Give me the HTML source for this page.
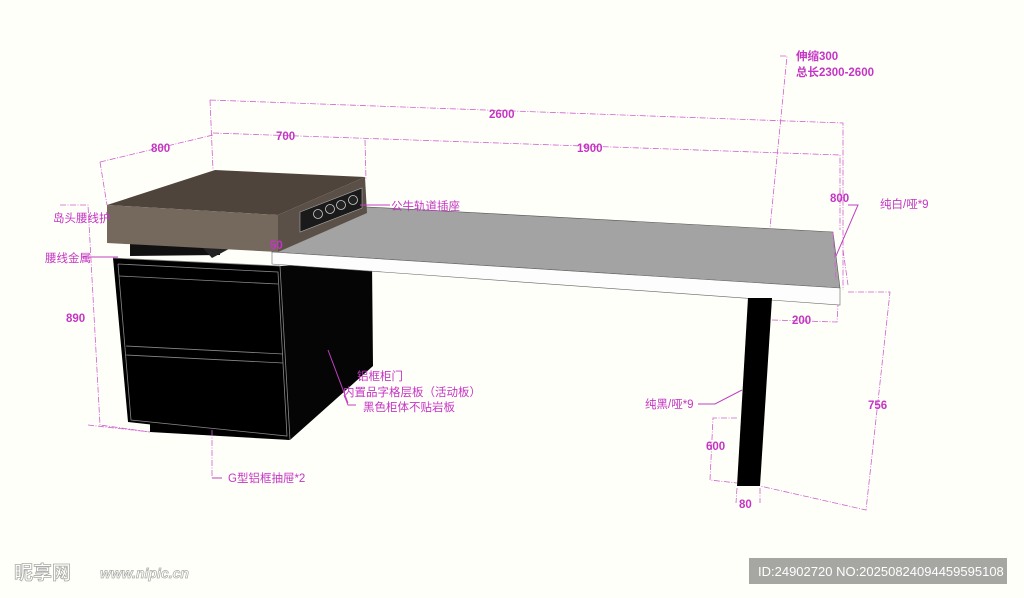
<!DOCTYPE html>
<html><head><meta charset="utf-8"><style>
html,body{margin:0;padding:0;background:#fffff9;}
svg{display:block}
text{font-family:"Liberation Sans","Noto Sans CJK SC",sans-serif;fill:#c535c5;font-size:11.5px}
.b{font-weight:bold}
.d{stroke:#d060d0;stroke-width:0.8;fill:none;stroke-dasharray:6 1.5 1 1.5}
.l{stroke:#c040c0;stroke-width:1;fill:none}
</style></head><body>
<svg width="1024" height="598" viewBox="0 0 1024 598" xmlns="http://www.w3.org/2000/svg">
<rect width="1024" height="598" fill="#fffff9"/>
<polygon points="150,420 290,428 290,440 150,432" fill="#000"/>
<polygon points="113,258 280,266 290,440 128,422" fill="#000"/>
<polygon points="280,266 372,262 373,366 290,440" fill="#050505"/>
<g stroke="#888" stroke-width="0.8" fill="none">
<polyline points="113,258 280,266 290,440"/>
<polyline points="118,264 278,272 287,436 131,420 118,264"/>
<line x1="119" y1="276" x2="278" y2="284"/>
<line x1="126" y1="346" x2="283" y2="354"/>
<line x1="126" y1="355" x2="283" y2="363"/>
</g>
<polygon points="130,243 220,243 220,255 130,256" fill="#111"/>
<polygon points="200,245 240,243 212,258" fill="#222"/>
<polygon points="330,205 833,232 840,288 272,252" fill="#a3a3a3" stroke="#555" stroke-width="0.6"/>
<polygon points="272,252 840,288 840,305 272,264" fill="#fdfdfd" stroke="#666" stroke-width="0.6"/>
<polygon points="748,298 772,298 760,486 737,486" fill="#000"/>
<polygon points="107,205 215,170 365,177 278,215" fill="#4f443b"/>
<polygon points="107,205 278,215 278,252 107,243" fill="#75685d"/>
<polygon points="278,215 365,177 367,213 278,252" fill="#5a5047"/>
<polygon points="300,212 362,188 362,208 300,232" fill="#1a1a1a" stroke="#aaa" stroke-width="0.6"/>
<circle cx="318" cy="214" r="4.5" fill="#222" stroke="#ccc" stroke-width="0.8"/>
<circle cx="330" cy="209" r="4.5" fill="#222" stroke="#ccc" stroke-width="0.8"/>
<circle cx="341" cy="205" r="4.5" fill="#222" stroke="#ccc" stroke-width="0.8"/>
<circle cx="353" cy="200" r="4.5" fill="#222" stroke="#ccc" stroke-width="0.8"/>
<polyline class="d" points="210,100 843,123 843,290"/>
<line class="d" x1="210" y1="100" x2="213" y2="170"/>
<polyline class="d" points="213,133 840,155 840,230"/>
<line class="d" x1="365" y1="140" x2="366" y2="180"/>
<polyline class="d" points="100,162 213,135"/>
<line class="d" x1="100" y1="162" x2="107" y2="205"/>
<polyline class="d" points="780,56 787,56 770,228"/>
<polyline class="d" points="60,205 88,205 100,425 150,432"/>
<polyline class="d" points="88,425 150,432"/>
<polyline class="d" points="833,232 836,280"/>
<polyline class="d" points="843,250 848,285"/>
<polyline class="d" points="848,292 890,292 866,510 760,486"/>
<polyline class="d" points="772,320 837,322 838,305"/>
<polyline class="d" points="737,418 713,418 710,480 737,483"/>
<polyline class="d" points="737,488 736,503"/>
<polyline class="d" points="760,488 760,503"/>
<line class="d" x1="212" y1="430" x2="212" y2="478"/>
<line class="l" x1="82" y1="257" x2="118" y2="257"/>
<polyline class="l" points="360,205 390,205"/>
<polyline class="l" points="848,205 858,205 836,256"/>
<polyline class="l" points="698,404 715,404 742,390"/>
<polyline class="l" points="348,403 328,350"/>
<polyline class="l" points="356,405 348,405 344,395"/>
<polyline class="l" points="212,478 222,478"/>
<text x="489" y="118" class="b">2600</text>
<text x="276" y="140" class="b">700</text>
<text x="577" y="152" class="b">1900</text>
<text x="151" y="152" class="b">800</text>
<text x="796" y="60" class="b">伸缩300</text>
<text x="796" y="76" class="b">总长2300-2600</text>
<text x="830" y="202" class="b">800</text>
<text x="880" y="208">纯白/哑*9</text>
<text x="391" y="210">公牛轨道插座</text>
<text x="53" y="222">岛头腰线护</text>
<text x="45" y="262">腰线金属</text>
<text x="270" y="249" class="b">50</text>
<text x="66" y="322" class="b">890</text>
<text x="792" y="324" class="b">200</text>
<text x="645" y="408">纯黑/哑*9</text>
<text x="868" y="409" class="b">756</text>
<text x="706" y="450" class="b">600</text>
<text x="739" y="508" class="b">80</text>
<text x="357" y="380">铝框柜门</text>
<text x="343" y="396">内置品字格层板（活动板）</text>
<text x="363" y="411">黑色柜体不贴岩板</text>
<text x="228" y="482">G型铝框抽屉*2</text>
<text x="14" y="579" style="font-size:19px;fill:none;stroke:#aaa;stroke-width:0.8;font-weight:bold">昵享网</text>
<text x="100" y="578" style="font-size:14px;fill:none;stroke:#aaa;stroke-width:0.7;font-weight:bold;font-style:italic">www.nipic.cn</text>
<rect x="749" y="558" width="258" height="26" fill="#a6a6a2"/>
<text x="758" y="576" style="font-size:13px;fill:#fff">ID:24902720 NO:20250824094459595108</text>
</svg>
</body></html>
